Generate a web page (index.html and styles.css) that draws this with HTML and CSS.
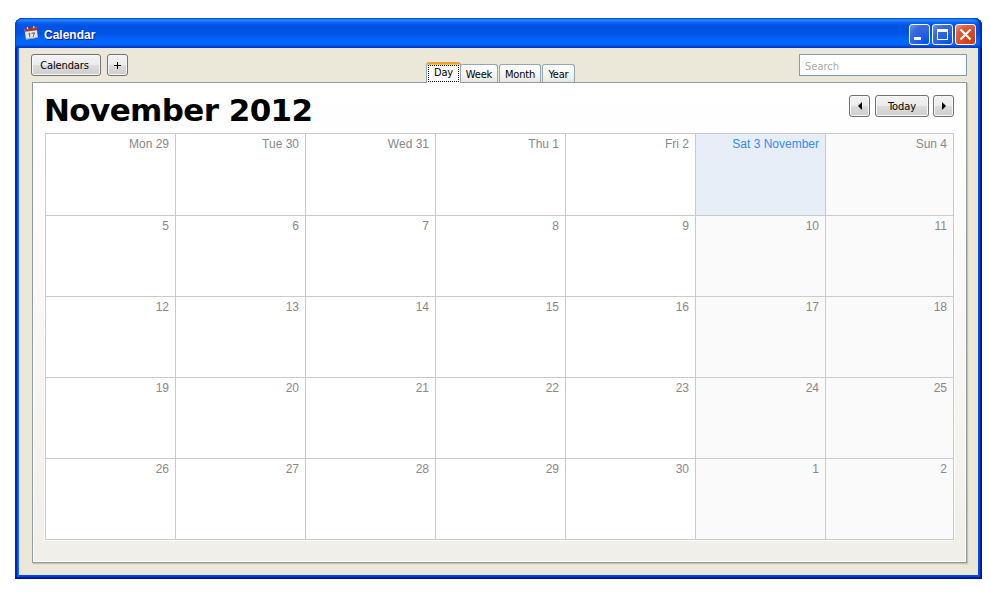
FILE: index.html
```html
<!DOCTYPE html>
<html lang="en">
<head>
<meta charset="utf-8">
<title>Calendar</title>
<link rel="stylesheet" href="styles.css">
</head>
<body>
<main class="window">
  <header class="titlebar">
    <svg class="app-icon" width="14" height="14" viewBox="0 0 14 14">
      <path d="M.5 3.2 12.6 1l1.2 10.6L2 13.4z" fill="#e8e8ec"/>
      <path d="M.4 2.6 12.6.8l.5 3.5L.9 5.8z" fill="#a83434"/>
      <path d="M3.5 1v2.2M9.8 0v2.2" stroke="#e8c8c8" stroke-width="1.3"/>
      <path d="M4.3 8.2 5.7 7v4.2M7.5 7.3l3-.5-1.4 4" fill="none" stroke="#555"/>
      <path d="M2 13.2l11.6-1.7" stroke="#999"/>
    </svg>
    <h1 class="title">Calendar</h1>
    <div class="controls">
      <button class="control" aria-label="Minimize"><svg width="19" height="19"><path d="M4 12h7v3H4z" fill="#fff"/></svg></button>
      <button class="control" aria-label="Maximize"><svg width="19" height="19"><path d="M4 4h11v11H4zM5 7v7h9V7z" fill="#fff" fill-rule="evenodd"/></svg></button>
      <button class="control close" aria-label="Close"><svg width="19" height="19"><path d="M4.5 4.5l10 10M14.5 4.5l-10 10" stroke="#fff" stroke-width="2.2"/></svg></button>
    </div>
  </header>
  <div class="client">
    <div class="toolbar">
      <div class="actions">
        <button class="btn calendars">Calendars</button>
        <button class="btn small"><svg width="7" height="7"><path d="M3 0h1v3h3v1H4v3H3V4H0V3h3z"/></svg></button>
      </div>
      <nav class="tabs">
        <button class="tab active"><span class="focus">Day</span></button>
        <button class="tab week">Week</button>
        <button class="tab month">Month</button>
        <button class="tab year">Year</button>
      </nav>
      <input class="search" type="text" placeholder="Search">
    </div>
    <section class="panel">
      <div class="heading">
        <h2 class="period">November 2012</h2>
        <div class="pager">
          <button class="btn small" aria-label="Previous"><svg width="4" height="8"><path d="M4 0v8L0 4z"/></svg></button>
          <button class="btn today">Today</button>
          <button class="btn small" aria-label="Next"><svg width="4" height="8"><path d="M0 0v8l4-4z"/></svg></button>
        </div>
      </div>
      <div class="month-grid">
        <div class="day">Mon 29</div><div class="day">Tue 30</div><div class="day">Wed 31</div><div class="day">Thu 1</div><div class="day">Fri 2</div><div class="day current">Sat 3 November</div><div class="day weekend">Sun 4</div>
        <div class="day">5</div><div class="day">6</div><div class="day">7</div><div class="day">8</div><div class="day">9</div><div class="day weekend">10</div><div class="day weekend">11</div>
        <div class="day">12</div><div class="day">13</div><div class="day">14</div><div class="day">15</div><div class="day">16</div><div class="day weekend">17</div><div class="day weekend">18</div>
        <div class="day">19</div><div class="day">20</div><div class="day">21</div><div class="day">22</div><div class="day">23</div><div class="day weekend">24</div><div class="day weekend">25</div>
        <div class="day">26</div><div class="day">27</div><div class="day">28</div><div class="day">29</div><div class="day">30</div><div class="day weekend">1</div><div class="day weekend">2</div>
      </div>
    </section>
  </div>
</main>
</body>
</html>
```
FILE: styles.css
```css
* { box-sizing: border-box; }
body {
  margin: 0;
  padding: 18px 0 0 15px;
  height: 596px;
  overflow: hidden;
  background: #fff;
  font: 11px "DejaVu Sans Condensed", "DejaVu Sans", sans-serif;
  color: #000;
}
button { margin: 0; padding: 0; font: inherit; color: inherit; }
svg { display: block; }
.window {
  width: 967px;
  height: 561px;
  padding: 0 4px 4px;
  border-radius: 8px 8px 0 0;
  background: #0042e0;
  box-shadow: inset -1px -1px #00138c, inset -2px -2px #001ea0, inset 2px 0 #0020d0, inset 3px 0 #0a4ce6, inset 4px 0 #1668f2, inset -3px -3px #0441e0, inset -4px -4px #0448ea;
}
.titlebar {
  display: flex;
  align-items: center;
  height: 30px;
  margin: 0 -4px;
  padding: 3px 6px 0 9px;
  border-radius: 8px 8px 0 0;
  background: linear-gradient(#0058d8 0, #2d8cff 2px, #0b6af4 4px, #0054e3 7px, #0053e1 15px, #0064fc 21px, #0067ff 26px, #0050e0 28px, #003dcc 30px);
  box-shadow: inset -2px 0 2px #0028a8, inset 1px 0 1px #0040cc;
}
.app-icon { margin: -4px 0 0; }
.title {
  flex: 1;
  margin: 0 0 0 6px;
  font: bold 12px "Liberation Sans", sans-serif;
  color: #fff;
  text-shadow: 1px 1px #0a1883;
}
.controls { display: flex; gap: 2px; }
.control {
  width: 21px;
  height: 21px;
  border: 1px solid #fff;
  border-radius: 3px;
  background: radial-gradient(circle at 90% 95%, #0050f0, #2c62e0 45%, #3a68dc 70%, #6f98f0);
}
.close { background: radial-gradient(circle at 90% 95%, #d03c0c, #da4c26 50%, #e06040 75%, #f09a80); }
.client { height: 527px; padding: 6px 11px 12px 12px; background: #ebe7d9; }
.toolbar { display: flex; justify-content: space-between; height: 28px; }
.actions { display: flex; gap: 6px; }
.btn {
  display: flex;
  align-items: center;
  justify-content: center;
  height: 22px;
  border: 1px solid #707070;
  border-radius: 3px;
  background: linear-gradient(#f3f3f3, #ebebeb 48%, #dcdcdc 52%, #cdcdcd);
  box-shadow: inset 0 0 0 1px #f8f8f8;
}
.calendars { width: 70px; padding-right: 3px; letter-spacing: -.15px; }
.small { width: 21px; }
.tabs { display: flex; align-items: flex-end; gap: 1px; margin-left: 74px; }
.tab {
  height: 18px;
  padding-top: 1px;
  border: 1px solid #91a7b4;
  border-bottom: 0;
  border-radius: 3px 3px 0 0;
  background: linear-gradient(#fff, #f5f5f2 60%, #e8e6dd);
  letter-spacing: -.2px;
}
.active {
  z-index: 1;
  width: 35px;
  height: 21px;
  margin: 0 -2px -1px 0;
  padding: 0 1px 1px;
  border-top: 2px solid #eba03c;
  background: #fcfcfe;
  box-shadow: inset 0 1px #ffc73c;
}
.focus { display: block; height: 17px; margin-top: 1px; border: 1px dotted #000; line-height: 14px; }
.week { width: 38px; }
.month { width: 42px; }
.year { width: 33px; }
.search {
  width: 168px;
  height: 22px;
  padding: 2px 5px 0;
  border: 1px solid #7f9db9;
  background: #fff;
  font: inherit;
}
.search::placeholder { color: #aaa; opacity: 1; }
.panel {
  width: 935px;
  height: 481px;
  margin-left: 1px;
  padding: 11px;
  border: 1px solid #919b9c;
  background: linear-gradient(#fff, #fbfbfa 30%, #f0efea);
  box-shadow: inset 0 0 0 1px #fff, 1px 1px 1px #c5c2b4;
}
.heading { display: flex; justify-content: space-between; height: 39px; padding-right: 1px; }
.period { margin: -3px 0 0; font: bold 31px/38px "DejaVu Sans", sans-serif; letter-spacing: -.6px; white-space: nowrap; }
.pager { display: flex; gap: 5px; padding-top: 1px; }
.today { width: 54px; letter-spacing: -.1px; margin-right: -1px; }
.month-grid {
  display: grid;
  width: 909px;
  margin-left: 1px;
  grid-template-columns: repeat(6, 130px) 128px;
  grid-template-rows: 82px repeat(4, 81px);
  border: solid #c8cacb;
  border-width: 1px 0 0 1px;
  background: #fff;
  box-shadow: 0 0 0 1px #fff;
}
.day {
  padding: 3px 6px 0 0;
  border: solid #c8cacb;
  border-width: 0 1px 1px 0;
  font: 12px/14px "Liberation Sans", sans-serif;
  color: #888;
  text-align: right;
}
.weekend { background: #fafafa; }
.current { background: #e7eef7; color: #318cf5; }
```
